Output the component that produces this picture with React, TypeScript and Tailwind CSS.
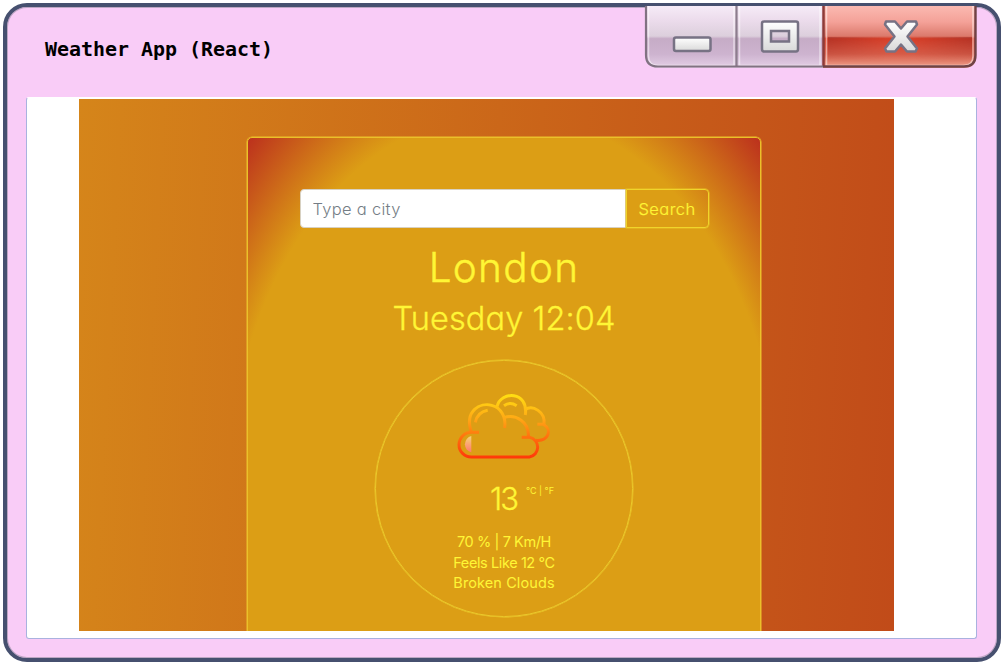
import React from "react";

function WindowControls() {
  return (
    <svg width="334" height="64" viewBox="0 0 334 64" className="-mt-[1px] block">
      <defs>
        <linearGradient id="grey" x1="0" y1="0" x2="0" y2="1">
          <stop offset="0" stopColor="#f6ebf7" />
          <stop offset=".22" stopColor="#ecdcec" />
          <stop offset=".47" stopColor="#dccfdc" />
          <stop offset=".51" stopColor="#c6acc6" />
          <stop offset=".75" stopColor="#cdb3cf" />
          <stop offset="1" stopColor="#e8d4ea" />
        </linearGradient>
        <linearGradient id="red" x1="0" y1="0" x2="0" y2="1">
          <stop offset="0" stopColor="#fbb9b1" />
          <stop offset=".25" stopColor="#f4a198" />
          <stop offset=".47" stopColor="#db7a6c" />
          <stop offset=".51" stopColor="#d63e28" />
          <stop offset=".75" stopColor="#d65b47" />
          <stop offset="1" stopColor="#f3ac98" />
        </linearGradient>
        <linearGradient id="side" x1="0" y1="0" x2="1" y2="0">
          <stop offset="0" stopColor="#7d2020" stopOpacity=".4" />
          <stop offset=".4" stopColor="#7d2020" stopOpacity="0" />
          <stop offset=".6" stopColor="#7d2020" stopOpacity="0" />
          <stop offset="1" stopColor="#7d2020" stopOpacity=".4" />
        </linearGradient>
        <linearGradient id="sideFade" x1="0" y1="0" x2="0" y2="1">
          <stop offset="0" stopColor="#fff" />
          <stop offset="1" stopColor="#000" />
        </linearGradient>
        <mask id="fade"><rect x="183" y="30" width="146" height="27" fill="url(#sideFade)" /></mask>
        <linearGradient id="glyph" x1="0" y1="0" x2="0" y2="1">
          <stop offset="0" stopColor="#fff" />
          <stop offset="1" stopColor="#d9d9d9" />
        </linearGradient>
        <clipPath id="frame"><path d="M2 0H332V50Q332 62 320 62H14Q2 62 2 50Z" /></clipPath>
      </defs>
      <g clipPath="url(#frame)">
        <rect width="179" height="64" fill="url(#grey)" />
        <rect x="179" width="155" height="64" fill="url(#red)" />
        <rect x="184" y="31" width="144" height="25" fill="url(#side)" mask="url(#fade)" />
        <path d="M4.500 0V50Q4.500 59.500 14 59.500H90V0M95.500 0V59.500H176V0M182.500 0V59.500H319Q329 59.500 329 50V0" fill="none" stroke="#fff" strokeOpacity=".5" strokeWidth="1.500" />
        <path d="M92.500 0V61" stroke="#8c7d8d" strokeWidth="2.200" />
        <path d="M179.500 0V61" stroke="#8e3b38" strokeWidth="2.500" />
      </g>
      <path d="M2 0V49Q2 60.500 14 60.500H179" fill="none" stroke="#817282" strokeWidth="2.200" />
      <path d="M179 60.500H320Q331.500 60.500 331.500 49V0" fill="none" stroke="#704345" strokeWidth="2.400" />
      <rect x="30" y="31.500" width="36.500" height="13.500" rx="2" fill="url(#glyph)" stroke="#777284" strokeWidth="2.500" />
      <path fillRule="evenodd" d="M120 15.500H152Q154 15.500 154 17.500V43Q154 45.500 152 45.500H120Q118 45.500 118 43V17.500Q118 15.500 120 15.500ZM127 25V35.500H145V25Z" fill="url(#glyph)" stroke="#777284" strokeWidth="2.500" />
      <path d="M242 15.500H251L257 22.500L263 15.500H272L273 18.500L263.500 30.500L273 42.500L271.500 45.500H263L257 38.500L251 45.500H242.500L241 42.500L250.500 30.500L241 18.500Z" fill="url(#glyph)" stroke="#777284" strokeWidth="2.500" strokeLinejoin="round" />
    </svg>
  );
}

function CloudIcon() {
  return (
    <svg width="100" height="72" viewBox="45 29 300 216" className="block" fill="none" strokeWidth="9">
      <defs>
        <linearGradient id="heat" gradientUnits="userSpaceOnUse" x1="0" y1="40" x2="0" y2="235">
          <stop offset="0" stopColor="#ffe112" />
          <stop offset=".4" stopColor="#ffa615" />
          <stop offset=".7" stopColor="#ff6b0d" />
          <stop offset="1" stopColor="#ff3609" />
        </linearGradient>
        <linearGradient id="shine" x1="0" y1="0" x2="0" y2="1">
          <stop offset="0" stopColor="#f7d476" />
          <stop offset="1" stopColor="#ff7770" />
        </linearGradient>
      </defs>
      <g stroke="url(#heat)">
        <path d="M120 156H97A37 37 0 0 0 97 230H271A30 30 0 0 0 272 171H248" />
        <path d="M97 156C75 90 125 66 158 75C185 82 202 108 197 143" />
        <path d="M195 112C230 100 272 125 268 171" />
        <path d="M174 79C185 31 269 31 259 104" />
        <path d="M258 88C281 73 320 94 315 132H295" />
        <path d="M313 132C342 150 327 183 291 180" />
        <path d="M109 126Q115 96 146 90M195 76Q213 63 233 76" />
      </g>
      <path d="M97 167A24 25 0 0 0 97 216Z" fill="url(#shine)" />
    </svg>
  );
}

export default function App() {
  return (
    <div className="h-[664px] w-[1003px] bg-white pl-[3px] pt-[3px]">
      <div className="flex h-[659px] w-[998px] flex-col rounded-[24px] border-[4px] border-[#46506f] bg-[#f9ccf7] shadow-[inset_0_0_0_1px_#bda6c3]">
        <header className="flex h-[90px] shrink-0 items-start justify-between pl-[38px] pr-[19px]">
          <h1 className="mt-[30px] whitespace-pre font-['DejaVu_Sans_Mono',monospace] text-[19.950px] leading-[24px] font-bold text-black">Weather App (React)</h1>
          <WindowControls />
        </header>
        <main className="ml-[19px] flex h-[542px] w-[951px] shrink-0 rounded-[3px] border border-[#a9b2df] border-t-white bg-white pt-[1px] pl-[51.500px]">
          <section className="h-[532px] w-[815.500px] overflow-hidden bg-[linear-gradient(93deg,#d5851a_0%,#ca6419_55%,#c14b19_100%)] pt-[38px] pl-[168.500px] font-[Inter,'Noto_Sans',sans-serif] text-[#fff635] [font-feature-settings:'cv11']">
            <div className="flex h-[710px] w-[514px] flex-col items-center rounded-[5px] border-[1.500px] border-[#ebc02a] bg-[radial-gradient(ellipse_at_center,#dc9e15_76%,#bc301d_100%)] pt-[51px] shadow-[0_0_0_0.500px_#ebc02a]">
              <form className="flex h-[39px] w-[409px] shrink-0">
                <input aria-label="City" placeholder="Type a city" className="w-[326px] rounded-l-[4px] border border-[#d8d1c2] bg-white pt-[2px] pl-[12px] text-[16.500px] font-light tracking-[0.300px] outline-none placeholder:text-[#747d85]" />
                <button type="button" className="w-[83px] rounded-r-[4px] border border-[#f0d52a] pt-[2px] text-[16.500px] font-light tracking-[0.450px] shadow-[0_0_0_0.500px_#e8c127] [-webkit-text-stroke:0.200px]">Search</button>
              </form>
              <h2 className="mt-[16px] h-[48px] whitespace-nowrap text-[40.500px] leading-[48px] font-light tracking-[1.300px] [-webkit-text-stroke:0.400px]">London</h2>
              <h3 className="mt-[7px] h-[40px] whitespace-nowrap text-[32.500px] leading-[40px] font-light tracking-[0.100px] [-webkit-text-stroke:0.300px]">Tuesday 12:04</h3>
              <div className="mt-[21px] flex h-[257px] w-[258px] shrink-0 flex-col items-center rounded-full border border-[#ebc92b] pt-[29px] shadow-[0_0_0_0.500px_#ebc92b]">
                <CloudIcon />
                <div className="mt-[18px] flex h-[38px] items-start gap-[9px] pl-[36px]">
                  <span className="text-[31px] leading-[38px] font-light tracking-[-2px] [-webkit-text-stroke:0.300px]">13</span>
                  <span className="mt-[5px] whitespace-nowrap text-[9px] leading-[12px]">°C | °F</span>
                </div>
                <div className="mt-[14px] whitespace-nowrap text-center text-[14.500px] leading-[20.600px] font-normal">
                  <p className="tracking-[-0.400px]">70 % | 7 Km/H</p>
                  <p className="tracking-[-0.400px]">Feels Like 12 °C</p>
                  <p className="tracking-[0.100px]">Broken Clouds</p>
                </div>
              </div>
            </div>
          </section>
        </main>
      </div>
    </div>
  );
}
